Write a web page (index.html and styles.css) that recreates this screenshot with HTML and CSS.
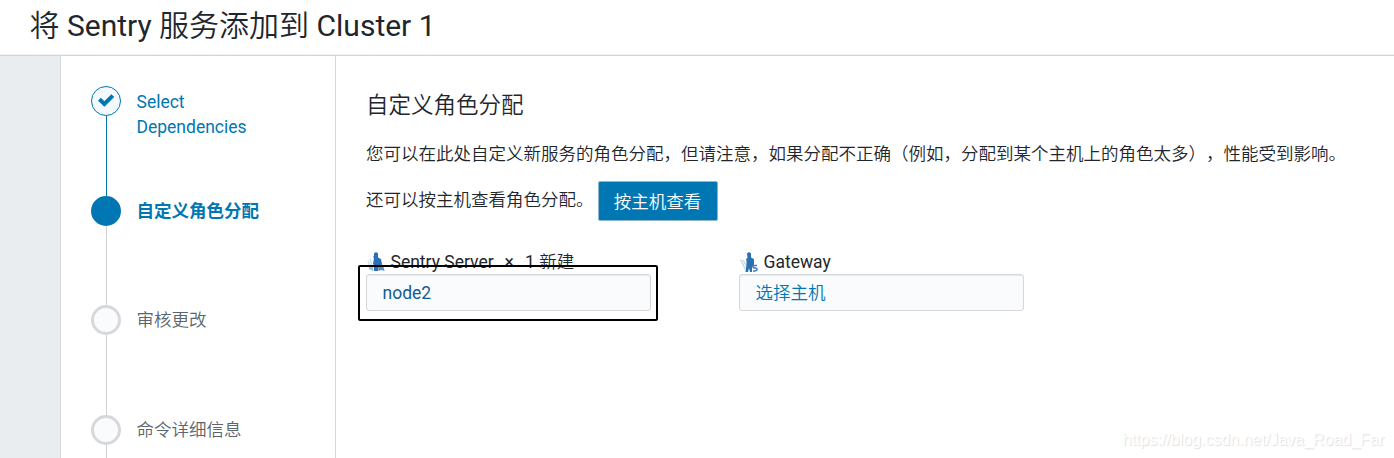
FILE: index.html
```html
<!DOCTYPE html>
<html lang="zh-CN">
<head>
<meta charset="utf-8">
<title>将 Sentry 服务添加到 Cluster 1</title>
<link rel="stylesheet" href="styles.css">
</head>
<body>
<header class="header"><h1 class="title">将 Sentry 服务添加到 Cluster 1</h1></header>
<div class="wizard">
  <nav class="steps">
    <div class="step done">
      <div class="rail">
        <span class="dot"><svg class="check" width="18" height="14" viewBox="0 0 18 14"><path d="M2.4 6.2 7.4 11 15.8 2.6" fill="none" stroke="#0077b3" stroke-width="4"/></svg></span>
        <span class="line"></span>
      </div>
      <span class="label">Select<br>Dependencies</span>
    </div>
    <div class="step active">
      <div class="rail"><span class="dot"></span><span class="line"></span></div>
      <span class="label">自定义角色分配</span>
    </div>
    <div class="step">
      <div class="rail"><span class="dot"></span><span class="line"></span></div>
      <span class="label">审核更改</span>
    </div>
    <div class="step">
      <div class="rail"><span class="dot"></span><span class="line"></span></div>
      <span class="label">命令详细信息</span>
    </div>
  </nav>
  <main class="content">
    <h2 class="heading">自定义角色分配</h2>
    <p class="intro">您可以在此处自定义新服务的角色分配，但请注意，如果分配不正确（例如，分配到某个主机上的角色太多），性能受到影响。</p>
    <div class="view-row"><span>还可以按主机查看角色分配。</span><button class="button">按主机查看</button></div>
    <div class="roles">
      <section class="role">
        <div class="role-name">
          <svg class="role-icon" width="20" height="20" viewBox="0 0 20 20"><path d="M2 9l3 7M4 7l3 9" stroke="#d3e2f0" stroke-width="1.6"/><path d="M8 1.500q2-2.500 4 0v4l3 1.500 1 5-1 2-3 1v4H8v-6l-1-1 1-6-1-1 1-1z" fill="#2b70b2"/><path d="M12 15l4-3 1.500 3 1 4-3-1-3 1z" fill="#5b92c5"/><path d="M3 13l4 1v5l-4-2z" fill="#9dbddb"/></svg>
          <span>Sentry Server</span><span class="times">×</span><span class="count">1 新建</span>
        </div>
        <div class="select host">node2</div>
        <div class="marker"></div>
      </section>
      <section class="role">
        <div class="role-name">
          <svg class="role-icon" width="20" height="20" viewBox="0 0 20 20"><path d="M1.500 7.500l5 10M4 8l4 7" stroke="#c5d9eb" stroke-width="1.500"/><path d="M8 1.500q2-2.500 4 0v4l3 1.500v6l-2 2v5h-2l-1-4-1 4H6.500l1-7V9L7 7l1.500-1z" fill="#2b70b2"/><path d="M18 13.500h-2q-2 0-2 1.300t2 1.300 2 1.400-2 1.500h-2" fill="none" stroke="#3e7fba" stroke-width="1.500"/></svg>
          <span>Gateway</span>
        </div>
        <div class="select">选择主机</div>
      </section>
    </div>
  </main>
</div>
<div class="watermark">https://blog.csdn.net/Java_Road_Far</div>
</body>
</html>
```
FILE: styles.css
```css
* { box-sizing: border-box; }
body {
  margin: 0;
  height: 458px;
  overflow: hidden;
  display: flex;
  flex-direction: column;
  background: #fff;
  color: #1f272d;
  font: 17.5px/25px Roboto, "Noto Sans CJK SC DemiLight", "Noto Sans CJK SC", sans-serif;
  text-spacing-trim: space-all;
}
h1, h2, p { margin: 0; font-weight: 400; }
.header {
  flex: none;
  height: 56px;
  padding: 6px 0 0 29.5px;
  border-bottom: 1px solid #d3d6d9;
  box-shadow: inset 0 -1px #f3f3f4;
}
.title { font-size: 30px; line-height: 40px; }
.wizard {
  flex: 1;
  min-height: 0;
  display: flex;
  padding-left: 60px;
  background: #e9edf0;
}
.steps {
  flex: none;
  width: 276px;
  padding: 30px 0 0 30px;
  border: solid #d6d8dc;
  border-width: 0 1px;
  background: #fff;
}
.step { display: flex; gap: 15.5px; height: 109.7px; color: #5a656d; }
.step:last-child { height: 42.9px; }
.rail { width: 30px; display: flex; flex-direction: column; align-items: center; }
.dot {
  flex: none;
  width: 30px;
  height: 30px;
  display: flex;
  align-items: center;
  justify-content: center;
  border: 3px solid #d6d8dc;
  border-radius: 50%;
  background: #f9fbfd;
}
.check { flex: none; margin-bottom: 2px; }
.line { flex: 1; width: 1px; margin-left: 1px; background: #d0d2d5; }
.label { padding-top: 3px; }
.done .label { padding-top: 4px; }
.done, .active { color: #0077b3; }
.done .dot { border: 1px solid #0077b3; background: #f3f9fe; }
.done .line { background: #0077b3; }
.active .dot { border-color: #0077b3; background: #0077b3; }
.active .label { font-family: Roboto, "Noto Sans CJK SC", sans-serif; font-weight: 700; }
.content { flex: 1; padding: 32px 0 0 30px; background: #fff; }
.heading { font-size: 22.5px; line-height: 35px; }
.intro { margin-top: 19px; white-space: nowrap; }
.view-row { display: flex; gap: 4px; margin-top: 14px; line-height: 38px; }
.button {
  width: 120px;
  height: 40px;
  padding: 1px 0 0;
  border: 1px solid #8db5cb;
  border-radius: 2px;
  background: #0077b3;
  color: #fff;
  font: inherit;
}
.roles { display: flex; gap: 88px; margin-top: 28px; }
.role { position: relative; width: 285px; }
.role-name { display: flex; align-items: center; height: 25px; padding-top: 1px; white-space: nowrap; }
.role-icon { flex: none; margin-right: 4.5px; }
.times { margin-left: 11px; }
.count { margin-left: 11px; }
.select {
  height: 37px;
  padding-left: 15.5px;
  border: 1px solid #d6d8dc;
  border-radius: 3px;
  background: #f9fbfd;
  box-shadow: inset 0 1px 1px #e7e9eb;
  color: #0077b3;
  line-height: 36px;
}
.host { color: #135b94; }
.marker {
  position: absolute;
  left: -8px;
  top: 16px;
  width: 300px;
  height: 56px;
  border: 2px solid #000;
  border-radius: 2px;
}
.watermark {
  position: absolute;
  right: 10px;
  bottom: 7px;
  color: #fff;
  font: 16px/22px "Liberation Sans", Arial, sans-serif;
  text-shadow: 1px 1px 1px #ddd;
}
```
